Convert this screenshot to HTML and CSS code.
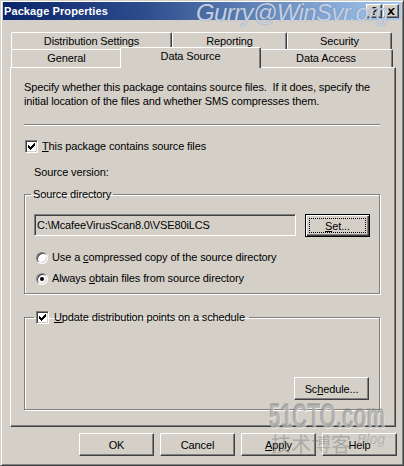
FILE: index.html
```html
<!DOCTYPE html>
<html>
<head>
<meta charset="utf-8">
<title>Package Properties</title>
<link rel="stylesheet" href="styles.css">
</head>
<body>
<div class="window">
  <div class="titlebar">
    <span class="title">Package Properties</span>
    <div class="tb-buttons">
      <span class="tbbtn help">?</span>
      <span class="tbbtn close"><svg width="8" height="7" viewBox="0 0 8 7"><path d="M0 0h2l2 2 2-2h2L5 3.5 8 7H6L4 5 2 7H0l3-3.5z" fill="#000"/></svg></span>
    </div>
  </div>

  <div class="tabs">
    <div class="tabrow back">
      <div class="tab t-dist">Distribution Settings</div>
      <div class="tab t-rep">Reporting</div>
      <div class="tab t-sec">Security</div>
    </div>
    <div class="tabrow front">
      <div class="tab t-gen">General</div>
      <div class="tab t-ds selected">Data Source</div>
      <div class="tab t-da">Data Access</div>
    </div>
  </div>

  <div class="panel">
    <p class="desc">Specify whether this package contains source files.&nbsp; If it does, specify the<br>initial location of the files and whether SMS compresses them.</p>
    <div class="sep"></div>
    <div class="check-row">
      <span class="cb checked"><svg width="7" height="7" viewBox="0 0 7 7"><path d="M0 2h1v1h1v1h1V3h1V2h1V1h1V0h1v3H6v1H5v1H4v1H3v1H2V6H1V5H0z" fill="#000"/></svg></span>
      <span class="label"><u>T</u>his package contains source files</span>
    </div>
    <div class="version">Source version:</div>

    <fieldset class="group g1">
      <legend>Source directory</legend>
      <div class="dir-row">
        <div class="input">C:\McafeeVirusScan8.0\VSE80iLCS</div>
        <div class="btn default set"><span class="focus"><u>S</u>et...</span></div>
      </div>
      <div class="radio-row r1">
        <span class="radio"></span>
        <span class="label">Use a <u>c</u>ompressed copy of the source directory</span>
      </div>
      <div class="radio-row r2">
        <span class="radio on"></span>
        <span class="label">Always <u>o</u>btain files from source directory</span>
      </div>
    </fieldset>

    <fieldset class="group g2">
      <legend>
        <span class="cb checked"><svg width="7" height="7" viewBox="0 0 7 7"><path d="M0 2h1v1h1v1h1V3h1V2h1V1h1V0h1v3H6v1H5v1H4v1H3v1H2V6H1V5H0z" fill="#000"/></svg></span>
        <span class="label"><u>U</u>pdate distribution points on a schedule</span>
      </legend>
      <div class="btn sched">Sc<u>h</u>edule...</div>
    </fieldset>
  </div>

  <div class="buttons">
    <div class="btn">OK</div>
    <div class="btn">Cancel</div>
    <div class="btn"><u>A</u>pply</div>
    <div class="btn">Help</div>
  </div>

  <div class="wm wm-gurry">Gurry@WinSvr.org</div>
  <div class="wm wm-51">51CTO.com</div>
  <div class="wm wm-cn">技术博客</div>
  <div class="wm wm-blog">Blog</div>
</div>
</body>
</html>
```

FILE: styles.css
```css
* { box-sizing: border-box; }
html, body { margin: 0; padding: 0; }
body {
  width: 404px;
  height: 466px;
  overflow: hidden;
  background: #d4d0c8;
  font-family: "Liberation Sans", Arial, sans-serif;
  font-size: 11px;
  letter-spacing: -0.12px;
  color: #000;
}
u { text-decoration: underline; text-underline-offset: 1px; }

.window {
  position: relative;
  width: 404px;
  height: 466px;
  background: #d4d0c8;
  border: 1px solid;
  border-color: #d4d0c8 #404040 #404040 #d4d0c8;
  box-shadow: inset 1px 1px #fff, inset -1px -1px #808080;
  padding: 1px 2px 2px 2px;
  display: flex;
  flex-direction: column;
  overflow: hidden;
}

/* Title bar */
.titlebar {
  height: 18px;
  flex: none;
  display: flex;
  align-items: center;
  justify-content: space-between;
  padding: 0 2px 0 1px;
  background: linear-gradient(to right, #0a246a 0%, #2c4c8c 35%, #a6caf0 100%);
}
.title {
  color: #fff;
  font-weight: bold;
  font-size: 11px;
  letter-spacing: 0.1px;
}
.tb-buttons { display: flex; gap: 1px; }
.tbbtn {
  width: 16px;
  height: 14px;
  display: flex;
  align-items: center;
  justify-content: center;
  background: #d4d0c8;
  border: 1px solid;
  border-color: #fff #404040 #404040 #fff;
  box-shadow: inset -1px -1px #808080;
  font-weight: bold;
  font-size: 11px;
  line-height: 1;
}

/* Tabs */
.tabs {
  margin: 12px 0 0 8px;
  width: 383px;
  flex: none;
}
.tabrow { display: flex; }
.tabrow.back { height: 17px; }
.tabrow.front { height: 18px; }
.tab {
  background: #d4d0c8;
  border-top: 1px solid #fff;
  border-left: 1px solid #fff;
  border-right: 1px solid #404040;
  box-shadow: inset -1px 0 #808080;
  border-top-left-radius: 2px;
  border-top-right-radius: 2px;
  text-align: center;
  line-height: 16px;
  white-space: nowrap;
}
.t-dist { width: 161px; }
.t-rep { width: 115px; }
.t-sec { width: 105px; }
.t-gen { width: 111px; }
.t-ds { width: 137px; }
.t-da { width: 134px; }
.tabrow.front .tab { line-height: 17px; }
.tab.selected {
  position: relative;
  z-index: 2;
  width: 141px;
  height: 21px;
  margin: -2px -2px 0 -2px;
  line-height: 16px;
}

/* Panel */
.panel {
  margin-left: 7px;
  width: 386px;
  height: 360px;
  flex: none;
  border: 1px solid;
  border-color: #fff #404040 #404040 #fff;
  box-shadow: inset -1px -1px #808080;
  padding: 12px 15px 0 13px;
  position: relative;
  z-index: 1;
}
.desc {
  margin: 0;
  line-height: 14px;
  white-space: nowrap;
}
.sep {
  margin-top: 16px;
  height: 2px;
  border-top: 1px solid #808080;
  border-bottom: 1px solid #fff;
}
.check-row {
  margin-top: 14px;
  height: 13px;
  display: flex;
  align-items: center;
  padding-left: 1px;
}
.cb {
  width: 13px;
  height: 13px;
  flex: none;
  display: inline-flex;
  align-items: center;
  justify-content: center;
  background: #fff;
  border: 1px solid;
  border-color: #808080 #fff #fff #808080;
  box-shadow: inset 1px 1px #404040, inset -1px -1px #d4d0c8;
  vertical-align: middle;
}
.check-row .label { margin-left: 4px; line-height: 13px; }
.version {
  margin-top: 12px;
  margin-left: 10px;
  line-height: 14px;
}

/* Group boxes */
.group {
  margin: 0;
  min-inline-size: 0;
  border: 1px solid #808080;
  box-shadow: inset 1px 1px #fff, 1px 1px #fff;
}
.group legend {
  line-height: 14px;
  padding: 0 2px;
}
.g1 {
  margin-top: 8px;
  padding: 13px 9px 8px 9px;
}
.g1 legend { margin-left: -3px; }
.dir-row {
  display: flex;
  align-items: flex-start;
  gap: 9px;
}
.input {
  width: 263px;
  height: 22px;
  border: 1px solid;
  border-color: #808080 #fff #fff #808080;
  box-shadow: inset 1px 1px #404040, inset -1px -1px #d4d0c8;
  padding: 0 2px;
  line-height: 20px;
  white-space: nowrap;
}
.radio-row {
  display: flex;
  align-items: center;
  height: 13px;
  padding-left: 2px;
}
.radio-row.r1 { margin-top: 14px; }
.radio-row.r2 { margin-top: 8px; }
.radio {
  width: 12px;
  height: 12px;
  flex: none;
  border-radius: 50%;
  background: #fff;
  border: 1px solid;
  border-color: #808080 #fff #fff #808080;
  box-shadow: inset 1px 1px #404040, inset -1px -1px #d4d0c8;
  position: relative;
}
.radio.on::after {
  content: "";
  position: absolute;
  left: 3px;
  top: 3px;
  width: 4px;
  height: 4px;
  border-radius: 50%;
  background: #000;
}
.radio-row .label { margin-left: 4px; line-height: 13px; }

.g2 {
  margin-top: 16px;
  height: 100px;
  padding: 0 10px 9px 9px;
  display: flex;
  flex-direction: column;
  justify-content: flex-end;
  align-items: flex-end;
}
.g2 legend {
  display: flex;
  align-items: center;
  height: 14px;
  padding: 0 4px 0 2px;
}
.g2 legend .label { margin-left: 5px; }

/* Buttons */
.btn {
  width: 75px;
  height: 23px;
  flex: none;
  display: flex;
  align-items: center;
  justify-content: center;
  background: #d4d0c8;
  border: 1px solid;
  border-color: #fff #404040 #404040 #fff;
  box-shadow: inset -1px -1px #808080;
  white-space: nowrap;
}
.btn.set {
  width: 65px;
  border-color: #000;
  box-shadow: inset 1px 1px #fff, inset -1px -1px #404040, inset -2px -2px #808080;
  padding: 3px;
}
.btn.set .focus {
  width: 100%;
  height: 100%;
  border: 1px dotted #000;
  display: flex;
  align-items: center;
  justify-content: center;
}
.buttons {
  margin-top: 6px;
  display: flex;
  justify-content: flex-end;
  gap: 6px;
  padding-right: 4px;
}

/* Watermarks over the screenshot */
.wm {
  position: absolute;
  pointer-events: none;
  white-space: nowrap;
  letter-spacing: 0;
}
.wm-gurry {
  left: 195px;
  top: 0;
  font-style: italic;
  font-size: 24px;
  line-height: 23px;
  letter-spacing: -0.6px;
  color: rgba(218, 226, 240, 0.85);
  text-shadow: 0 0 1px rgba(70, 90, 130, 0.7);
  z-index: 5;
}
.wm-51 {
  left: 268px;
  top: 395px;
  font-size: 35px;
  font-weight: bold;
  transform: scaleX(0.6);
  transform-origin: left top;
  color: rgba(140, 140, 140, 0.5);
  text-shadow: 1px 1px rgba(255, 255, 255, 0.6), -1px -1px rgba(90, 90, 90, 0.3);
  z-index: 5;
}
.wm-cn {
  left: 270px;
  top: 431px;
  font-family: "Noto Sans CJK SC", sans-serif;
  font-size: 20px;
  line-height: 24px;
  color: rgba(120, 120, 120, 0.45);
  z-index: 5;
}
.wm-blog {
  left: 356px;
  top: 430px;
  font-size: 14px;
  font-style: italic;
  color: rgba(150, 150, 150, 0.5);
  z-index: 5;
}
```
